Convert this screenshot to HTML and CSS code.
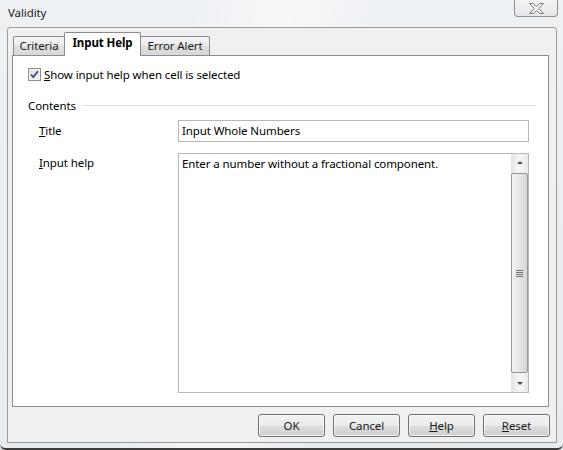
FILE: index.html
```html
<!DOCTYPE html>
<html>
<head>
<meta charset="utf-8">
<link rel="stylesheet" href="styles.css">
</head>
<body>
<div class="window">
  <div class="titlebar">
    <span class="title">Validity</span>
    <div class="close">
      <svg width="19" height="13" viewBox="0 0 19 13"><path d="M2.5 1.5h3.6l3.4 3 3.4-3h3.6l-4.8 5 4.8 5h-3.6l-3.4-3-3.4 3h-3.6l4.8-5z" fill="#f6f6f6" stroke="#7a7a7a" stroke-width="1" stroke-linejoin="round"/></svg>
    </div>
  </div>
  <div class="client">
    <div class="tabs">
      <div class="tab tab-criteria">Criteria</div>
      <div class="tab tab-active">Input Help</div>
      <div class="tab tab-error">Error Alert</div>
    </div>
    <div class="panel">
      <div class="check-row">
        <span class="checkbox">
          <svg width="11" height="11" viewBox="0 0 11 11"><path d="M2 5.5l2.3 2.6L9 2.2" fill="none" stroke="#3a4f8c" stroke-width="1.8"/></svg>
        </span>
        <span class="check-label"><u>S</u>how input help when cell is selected</span>
      </div>
      <div class="group-head">
        <span>Contents</span>
        <span class="group-line"></span>
      </div>
      <div class="row row-title">
        <span class="label"><u>T</u>itle</span>
        <div class="textbox">Input Whole Numbers</div>
      </div>
      <div class="row row-help">
        <span class="label label-top"><u>I</u>nput help</span>
        <div class="textarea">
          <div class="ta-text">Enter a number without a fractional component.</div>
          <div class="scrollbar">
            <div class="sb-btn"><span class="arrow-up"></span></div>
            <div class="sb-track">
              <div class="sb-thumb">
                <span class="grip"></span>
              </div>
            </div>
            <div class="sb-btn"><span class="arrow-down"></span></div>
          </div>
        </div>
      </div>
    </div>
    <div class="buttons">
      <button class="btn">OK</button>
      <button class="btn">Cancel</button>
      <button class="btn"><u>H</u>elp</button>
      <button class="btn"><u>R</u>eset</button>
    </div>
  </div>
</div>
</body>
</html>
```
FILE: styles.css
```css
* { box-sizing: border-box; }
html, body {
  margin: 0;
  padding: 0;
  width: 563px;
  height: 450px;
  overflow: hidden;
  background: #dfe3e8;
}
body {
  font-family: "Noto Sans", "Open Sans", sans-serif;
  font-size: 11.5px;
  letter-spacing: -0.1px;
  color: #000;
}
.window {
  width: 563px;
  height: 450px;
  background:
    linear-gradient(100deg, rgba(255,255,255,0) 30%, rgba(255,255,255,0.5) 45%, rgba(255,255,255,0) 60%),
    linear-gradient(180deg, #eef1f4 0%, #e9ecef 100%);
  border-bottom: 2px solid #3b3b3b;
  border-radius: 0 0 6px 6px;
  display: flex;
  flex-direction: column;
}
.titlebar {
  height: 27px;
  display: flex;
  align-items: flex-start;
  justify-content: space-between;
  padding-left: 8px;
  position: relative;
}
.title {
  margin-top: 5px;
  line-height: 16px;
  color: #1a1a1a;
}
.close {
  width: 44px;
  height: 17px;
  margin-right: 5px;
  border: 1px solid #8f8f8f;
  border-top: none;
  border-radius: 0 0 4px 4px;
  background: linear-gradient(#f3f4f5, #e4e6e9);
  display: flex;
  align-items: center;
  justify-content: center;
}
.client {
  margin: 0 6px 0 7px;
  height: 416px;
  border: 1px solid #9a9a9a;
  border-radius: 3px 3px 0 0;
  background: #f0f0f0;
  display: flex;
  flex-direction: column;
}
.tabs {
  display: flex;
  align-items: flex-end;
  height: 27px;
  padding-left: 5px;
  position: relative;
  z-index: 1;
}
.tab {
  height: 19px;
  border: 1px solid #898c95;
  border-bottom: none;
  border-radius: 2px 2px 0 0;
  background: linear-gradient(#f4f4f4 0%, #ebebeb 50%, #dedede 51%, #d8d8d8 100%);
  display: flex;
  align-items: center;
  justify-content: center;
  line-height: 16px;
  color: #1a1a1a;
}
.tab-criteria { width: 52px; }
.tab-active {
  width: 77px;
  height: 24px;
  margin-left: -1px;
  margin-bottom: -1px;
  background: #fff;
  font-weight: bold;
  padding-bottom: 3px;
  color: #000;
}
.tab-error { width: 70px; margin-left: -1px; }
.panel {
  margin-left: 4px;
  width: 537px;
  height: 352px;
  border: 1px solid #898c95;
  background: #fff;
}
.check-row {
  display: flex;
  align-items: center;
  margin: 12px 0 0 15px;
  height: 13px;
}
.checkbox {
  width: 13px;
  height: 13px;
  border: 1px solid #8e8f8f;
  background: linear-gradient(135deg, #dcdcdc, #f6f6f6);
  display: flex;
  align-items: center;
  justify-content: center;
  box-shadow: inset 0 0 0 1px #f4f4f4;
}
.check-label {
  margin-left: 3px;
  line-height: 16px;
}
.group-head {
  display: flex;
  align-items: center;
  margin: 16px 12px 0 15px;
  height: 16px;
}
.group-line {
  flex: 1;
  margin-left: 6px;
  border-top: 1px solid #dcdcdc;
}
.row {
  display: flex;
  margin-left: 26px;
}
.row-title {
  align-items: center;
  margin-top: 7px;
}
.row-help {
  align-items: flex-start;
  margin-top: 11px;
}
.label {
  width: 139px;
  line-height: 16px;
}
.label-top { padding-top: 2px; }
.textbox {
  width: 351px;
  height: 22px;
  border: 1px solid #b5b8bd;
  padding: 2px 3px;
  line-height: 16px;
}
.textarea {
  width: 351px;
  height: 240px;
  border: 1px solid #b5b8bd;
  display: flex;
}
.ta-text {
  flex: 1;
  padding: 2px 3px;
  line-height: 16px;
}
.scrollbar {
  width: 17px;
  display: flex;
  flex-direction: column;
  background: linear-gradient(90deg, #e3e3e3, #f4f4f4 40%, #f4f4f4 70%, #e8e8e8);
}
.sb-btn {
  height: 17px;
  display: flex;
  align-items: center;
  justify-content: center;
}
.arrow-up, .arrow-down {
  width: 0;
  height: 0;
  border-left: 3px solid transparent;
  border-right: 3px solid transparent;
}
.arrow-up { border-bottom: 3px solid #4e4e4e; }
.arrow-down { border-top: 3px solid #4e4e4e; }
.sb-track {
  flex: 1;
  padding: 2px 0;
  display: flex;
}
.sb-thumb {
  flex: 1;
  border: 1px solid #979797;
  border-radius: 2px;
  background: linear-gradient(90deg, #f2f2f2, #e6e6e6 50%, #d5d5d5);
  display: flex;
  align-items: center;
  justify-content: center;
}
.grip {
  width: 7px;
  height: 7px;
  background: repeating-linear-gradient(180deg, #6f6f6f 0 1px, transparent 1px 2px);
}
.buttons {
  display: flex;
  justify-content: flex-end;
  gap: 8px;
  padding-right: 6px;
  margin-top: 7px;
}
.btn {
  width: 67px;
  height: 23px;
  border: 1px solid #707070;
  border-radius: 3px;
  background: linear-gradient(#f2f2f2 0%, #ebebeb 50%, #dddddd 51%, #cfcfcf 100%);
  box-shadow: inset 0 0 0 1px rgba(255,255,255,0.7);
  font-family: inherit;
  font-size: 11.5px;
  letter-spacing: -0.1px;
  color: #1a1a1a;
  padding: 0;
  line-height: 16px;
}
```
